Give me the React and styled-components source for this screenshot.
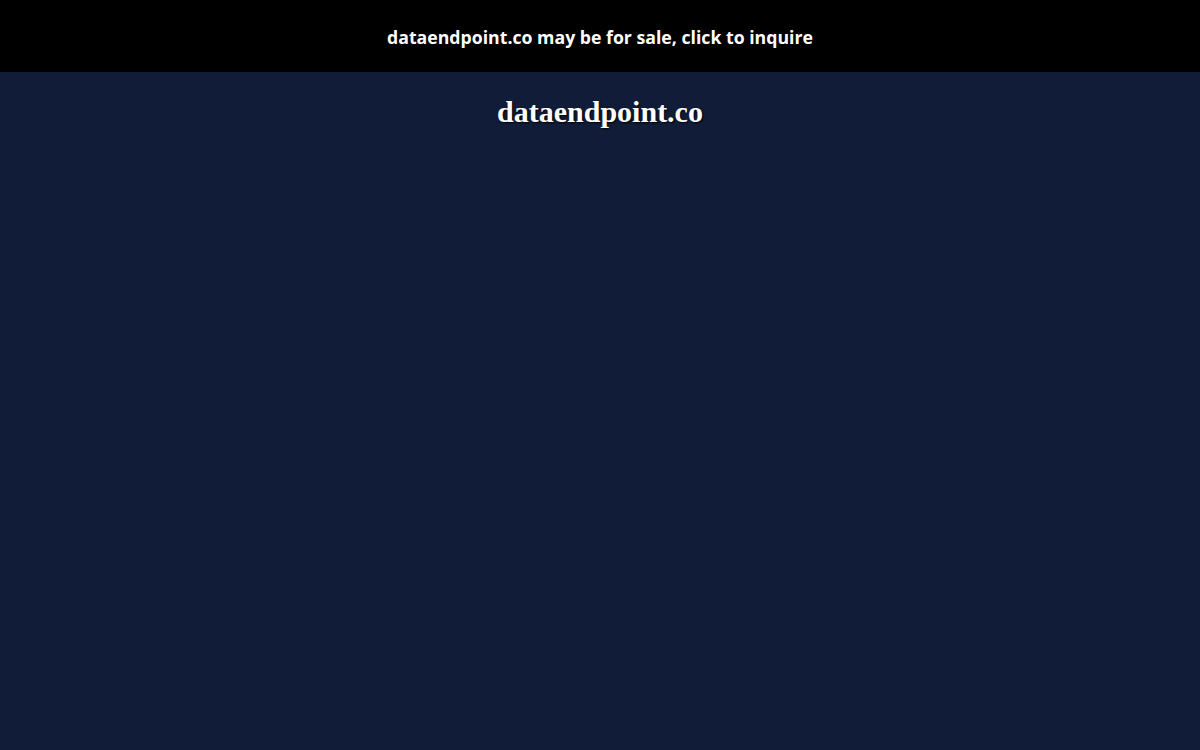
import React from 'react';
import styled, { createGlobalStyle } from 'styled-components';

const GlobalStyle = createGlobalStyle`
  html, body {
    margin: 0;
    padding: 0;
    height: 100%;
    background: #111c38;
  }
`;

const Page = styled.div`
  min-height: 100vh;
  background: #111c38;
  display: flex;
  flex-direction: column;
`;

const Banner = styled.a`
  display: flex;
  align-items: center;
  justify-content: center;
  height: 72px;
  padding-top: 2px;
  box-sizing: border-box;
  background: #000;
  color: #fff;
  font-family: 'Open Sans', 'Liberation Sans', sans-serif;
  font-weight: 700;
  font-size: 17.7px;
  text-decoration: none;
  cursor: pointer;
`;

const Title = styled.h1`
  margin: 23px 0 0;
  text-align: center;
  color: #fff;
  font-family: 'Liberation Serif', serif;
  font-weight: 700;
  font-size: 30px;
  line-height: 34px;
  text-shadow: 1px 1px 2px #000;
`;

const App = () => {
  return (
    <>
      <GlobalStyle />
      <Page>
        <Banner href="#">dataendpoint.co may be for sale, click to inquire</Banner>
        <Title>dataendpoint.co</Title>
      </Page>
    </>
  );
};

export default App;
